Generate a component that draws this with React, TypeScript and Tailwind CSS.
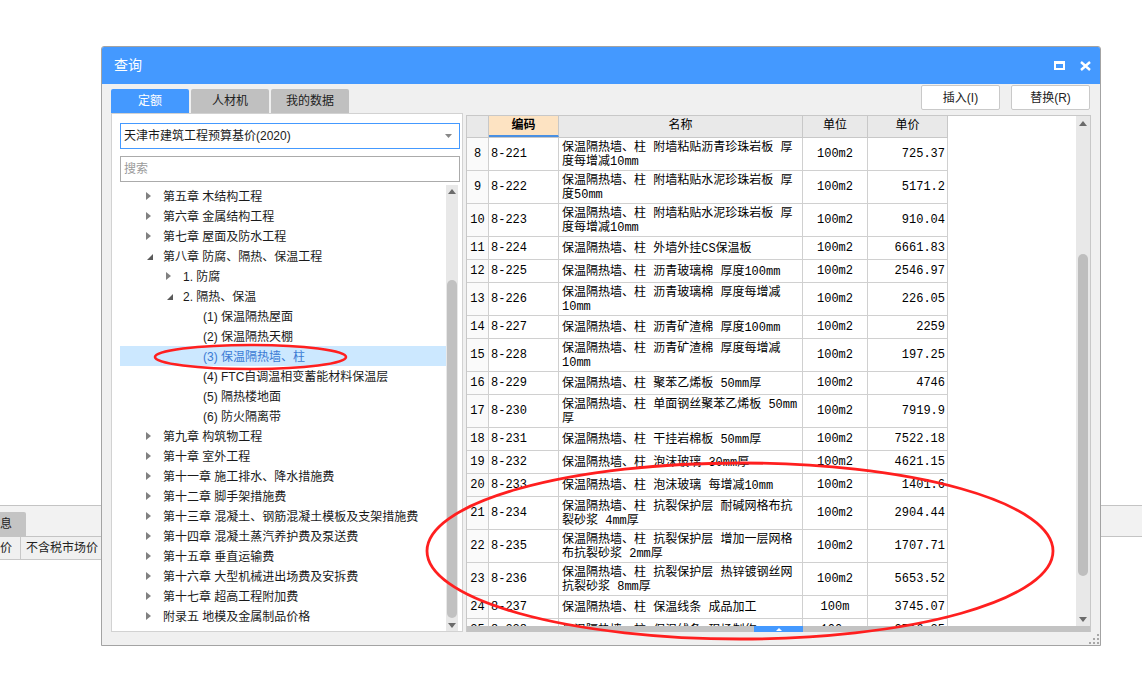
import React from 'react';

type TreeItem = { level: number; label: string; toggle?: 'open' | 'closed'; selected?: boolean };

const treeItems: TreeItem[] = [
  { level: 0, label: '第五章 木结构工程', toggle: 'closed' },
  { level: 0, label: '第六章 金属结构工程', toggle: 'closed' },
  { level: 0, label: '第七章 屋面及防水工程', toggle: 'closed' },
  { level: 0, label: '第八章 防腐、隔热、保温工程', toggle: 'open' },
  { level: 1, label: '1. 防腐', toggle: 'closed' },
  { level: 1, label: '2. 隔热、保温', toggle: 'open' },
  { level: 2, label: '(1) 保温隔热屋面' },
  { level: 2, label: '(2) 保温隔热天棚' },
  { level: 2, label: '(3) 保温隔热墙、柱', selected: true },
  { level: 2, label: '(4) FTC自调温相变蓄能材料保温层' },
  { level: 2, label: '(5) 隔热楼地面' },
  { level: 2, label: '(6) 防火隔离带' },
  { level: 0, label: '第九章 构筑物工程', toggle: 'closed' },
  { level: 0, label: '第十章 室外工程', toggle: 'closed' },
  { level: 0, label: '第十一章 施工排水、降水措施费', toggle: 'closed' },
  { level: 0, label: '第十二章 脚手架措施费', toggle: 'closed' },
  { level: 0, label: '第十三章 混凝土、钢筋混凝土模板及支架措施费', toggle: 'closed' },
  { level: 0, label: '第十四章 混凝土蒸汽养护费及泵送费', toggle: 'closed' },
  { level: 0, label: '第十五章 垂直运输费', toggle: 'closed' },
  { level: 0, label: '第十六章 大型机械进出场费及安拆费', toggle: 'closed' },
  { level: 0, label: '第十七章 超高工程附加费', toggle: 'closed' },
  { level: 0, label: '附录五 地模及金属制品价格', toggle: 'closed' },
];

type Row = { no: number; code: string; name: string; unit: string; price: string };

// names carry their own line break, as the grid wraps them
const rows: Row[] = [
  { no: 8, code: '8-221', name: '保温隔热墙、柱 附墙粘贴沥青珍珠岩板 厚\n度每增减10mm', unit: '100m2', price: '725.37' },
  { no: 9, code: '8-222', name: '保温隔热墙、柱 附墙粘贴水泥珍珠岩板 厚\n度50mm', unit: '100m2', price: '5171.2' },
  { no: 10, code: '8-223', name: '保温隔热墙、柱 附墙粘贴水泥珍珠岩板 厚\n度每增减10mm', unit: '100m2', price: '910.04' },
  { no: 11, code: '8-224', name: '保温隔热墙、柱 外墙外挂CS保温板', unit: '100m2', price: '6661.83' },
  { no: 12, code: '8-225', name: '保温隔热墙、柱 沥青玻璃棉 厚度100mm', unit: '100m2', price: '2546.97' },
  { no: 13, code: '8-226', name: '保温隔热墙、柱 沥青玻璃棉 厚度每增减\n10mm', unit: '100m2', price: '226.05' },
  { no: 14, code: '8-227', name: '保温隔热墙、柱 沥青矿渣棉 厚度100mm', unit: '100m2', price: '2259' },
  { no: 15, code: '8-228', name: '保温隔热墙、柱 沥青矿渣棉 厚度每增减\n10mm', unit: '100m2', price: '197.25' },
  { no: 16, code: '8-229', name: '保温隔热墙、柱 聚苯乙烯板 50mm厚', unit: '100m2', price: '4746' },
  { no: 17, code: '8-230', name: '保温隔热墙、柱 单面钢丝聚苯乙烯板 50mm\n厚', unit: '100m2', price: '7919.9' },
  { no: 18, code: '8-231', name: '保温隔热墙、柱 干挂岩棉板 50mm厚', unit: '100m2', price: '7522.18' },
  { no: 19, code: '8-232', name: '保温隔热墙、柱 泡沫玻璃 30mm厚', unit: '100m2', price: '4621.15' },
  { no: 20, code: '8-233', name: '保温隔热墙、柱 泡沫玻璃 每增减10mm', unit: '100m2', price: '1401.6' },
  { no: 21, code: '8-234', name: '保温隔热墙、柱 抗裂保护层 耐碱网格布抗\n裂砂浆 4mm厚', unit: '100m2', price: '2904.44' },
  { no: 22, code: '8-235', name: '保温隔热墙、柱 抗裂保护层 增加一层网格\n布抗裂砂浆 2mm厚', unit: '100m2', price: '1707.71' },
  { no: 23, code: '8-236', name: '保温隔热墙、柱 抗裂保护层 热锌镀钢丝网\n抗裂砂浆 8mm厚', unit: '100m2', price: '5653.52' },
  { no: 24, code: '8-237', name: '保温隔热墙、柱 保温线条 成品加工', unit: '100m', price: '3745.07' },
  { no: 25, code: '8-238', name: '保温隔热墙、柱 保温线条 现场制作', unit: '100m', price: '2716.35' },
];

const ArrowUp = () => (
  <svg width="8" height="5" viewBox="0 0 8 5">
    <polygon points="0,5 4,0 8,5" fill="#6b6b6b" />
  </svg>
);

const ArrowDown = () => (
  <svg width="8" height="5" viewBox="0 0 8 5">
    <polygon points="0,0 8,0 4,5" fill="#6b6b6b" />
  </svg>
);

const TreeRow: React.FC<{ item: TreeItem }> = ({ item }) => (
  <div
    className={`flex h-[20px] items-center whitespace-nowrap text-[12px] leading-[20px] ${
      item.selected ? 'bg-[#cce8ff] text-[#3b7bd4]' : 'text-[#1a1a1a]'
    }`}
    style={{ paddingLeft: 26 + item.level * 20 }}
  >
    <span className="flex w-[17px] shrink-0 items-center">
      {item.toggle === 'closed' && (
        <svg width="5" height="8" viewBox="0 0 5 8">
          <polygon points="0,0 5,4 0,8" fill="#808080" />
        </svg>
      )}
      {item.toggle === 'open' && (
        <svg width="6" height="6" viewBox="0 0 6 6" className="ml-[1px] mt-[2px]">
          <polygon points="6,0 6,6 0,6" fill="#5a5a5a" />
        </svg>
      )}
    </span>
    <span className="pt-[1px]">{item.label}</span>
  </div>
);

export default function App() {
  return (
    <div className="relative h-[681px] w-[1142px] overflow-hidden bg-white font-['Liberation_Sans','Noto_Sans_CJK_SC',sans-serif]">
      {/* application behind the dialog */}
      <div className="pt-[505px]">
        <div className="flex h-[32px] items-end border-y border-[#c4c4c4] bg-[#f2f2f2]">
          <div className="ml-[-14px] h-[24px] w-[40px] rounded-t-[2px] bg-[#c4c4c4] pl-[2px] text-[12px] leading-[24px] text-[#222]">
            信息
          </div>
        </div>
        <div className="flex h-[23px] w-[101px] border-b border-[#c8c8c8] bg-[#f0f0f0] text-[12px] leading-[22px] text-[#222]">
          <div className="w-[21px] overflow-hidden whitespace-nowrap border-r border-[#c8c8c8] pr-[8px] text-right" dir="rtl">
            价
          </div>
          <div className="w-[80px] pl-[5px]">不含税市场价</div>
        </div>
      </div>

      {/* dialog window */}
      <div className="absolute left-[101px] top-[46px] flex h-[600px] w-[1000px] flex-col overflow-hidden rounded-t-[3px] border border-[#a3a3a3] bg-[#f0f0f0]">
        {/* title bar */}
        <div className="flex h-[37px] shrink-0 items-center bg-[#4499ff] pl-[12px] pr-[9px]">
          <span className="text-[14px] text-white">查询</span>
          <div className="ml-auto flex items-center gap-[15px]">
            <svg width="11" height="9" viewBox="0 0 11 9">
              <rect x="1" y="1.5" width="9" height="6.5" fill="none" stroke="#fff" strokeWidth="2" />
              <rect x="0" y="0" width="11" height="3" fill="#fff" />
            </svg>
            <svg width="11" height="10" viewBox="0 0 11 10">
              <path d="M1 1 L10 9 M10 1 L1 9" stroke="#fff" strokeWidth="2.4" />
            </svg>
          </div>
        </div>

        {/* tabs + buttons */}
        <div className="flex h-[29px] shrink-0 pl-[9px] pr-[10px]">
          <div className="flex items-end gap-[2px] text-[12px]">
            <div className="h-[24px] w-[78px] rounded-t-[2px] bg-[#4499ff] text-center leading-[24px] text-white">定额</div>
            <div className="h-[24px] w-[78px] rounded-t-[2px] bg-[#c0c0c0] text-center leading-[24px] text-[#222]">人材机</div>
            <div className="h-[24px] w-[78px] rounded-t-[2px] bg-[#c0c0c0] text-center leading-[24px] text-[#222]">我的数据</div>
          </div>
          <div className="ml-auto mt-[1px] flex gap-[11px] text-[12px] text-[#222]">
            <button className="h-[25px] w-[79px] rounded-[2px] border border-[#c9c9c9] bg-white">插入(I)</button>
            <button className="h-[25px] w-[79px] rounded-[2px] border border-[#c9c9c9] bg-white">替换(R)</button>
          </div>
        </div>

        {/* main content */}
        <div className="flex h-[519px] shrink-0 items-start pl-[9px]">
          {/* left: tree */}
          <div className="flex h-[519px] w-[352px] flex-col border border-[#d2d2d2] bg-white">
            <div className="ml-[8px] mt-[9px] flex h-[26px] w-[340px] items-center border border-[#4499ff] pl-[3px] pr-[7px] text-[12px] text-[#1a1a1a]">
              <span>天津市建筑工程预算基价(2020)</span>
              <svg width="7" height="4" viewBox="0 0 7 4" className="ml-auto">
                <polygon points="0,0 7,0 3.5,4" fill="#888" />
              </svg>
            </div>
            <div className="ml-[8px] mt-[7px] flex h-[26px] w-[340px] items-center border border-[#ababab] pl-[3px] text-[12px] text-[#9a9a9a]">
              搜索
            </div>
            <div className="ml-[8px] mt-[3px] flex h-[446px]">
              <div className="w-[326px] overflow-hidden pt-[1px]">
                {treeItems.map((item) => (
                  <TreeRow key={item.label} item={item} />
                ))}
              </div>
              <div className="relative flex w-[12px] flex-col items-center bg-[#e8e8e8]">
                <div className="mt-[4px]">
                  <ArrowUp />
                </div>
                <div className="mt-[86px] h-[338px] w-[10px] rounded-[5px] bg-[#c1c1c1]" />
                <div className="mt-auto mb-[3px]">
                  <ArrowDown />
                </div>
              </div>
            </div>
          </div>

          {/* right: grid */}
          <div className="ml-[3px] mt-[2px] flex h-[517px] w-[625px] flex-col border-x border-t border-[#c8c8c8] bg-white font-['Liberation_Mono','Noto_Sans_CJK_SC',monospace] text-[12px] text-black">
            <div className="flex h-[510px]">
              <div className="flex-1 overflow-hidden">
                <div className="flex h-[22px] w-[481px] border-b border-[#c8c8c8] bg-[#e9e9e9] leading-[21px]">
                  <div className="w-[22px] border-r border-[#c8c8c8]" />
                  <div className="w-[70px] border-r border-b-2 border-r-[#c8c8c8] border-b-[#4a90e2] bg-[#fde3c2] text-center font-bold">编码</div>
                  <div className="w-[244px] border-r border-[#c8c8c8] text-center">名称</div>
                  <div className="w-[65px] border-r border-[#c8c8c8] text-center">单位</div>
                  <div className="w-[80px] border-r border-[#c8c8c8] text-center">单价</div>
                </div>
                {rows.map((r) => {
                  const tall = r.name.includes('\n');
                  return (
                    <div
                      key={r.no}
                      className={`flex w-[481px] border-b border-[#d0d0d0] ${tall ? 'h-[33px]' : 'h-[23px]'}`}
                    >
                      <div className="flex w-[22px] items-center justify-center border-r border-[#d0d0d0] bg-[#fafafa]">{r.no}</div>
                      <div className="flex w-[70px] items-center border-r border-[#d0d0d0] pl-[2px]">{r.code}</div>
                      <div className="flex w-[244px] items-center overflow-hidden whitespace-pre border-r border-[#d0d0d0] pl-[3px] pt-[1px] leading-[14px]">
                        {r.name}
                      </div>
                      <div className="flex w-[65px] items-center justify-center border-r border-[#d0d0d0]">{r.unit}</div>
                      <div className="flex w-[80px] items-center justify-end border-r border-[#d0d0d0] pr-[2px]">{r.price}</div>
                    </div>
                  );
                })}
              </div>
              <div className="flex w-[14px] flex-col items-center bg-[#e8e8e8]">
                <div className="mt-[5px]">
                  <ArrowUp />
                </div>
                <div className="mt-[128px] h-[322px] w-[10px] rounded-[5px] bg-[#bebebe]" />
                <div className="mt-auto mb-[4px]">
                  <ArrowDown />
                </div>
              </div>
            </div>
            <div className="h-[6px] bg-[#c3c3c3]">
              <div className="ml-[287px] flex h-[6px] w-[49px] items-start justify-center bg-[#4499ff]">
                <svg width="6" height="3" viewBox="0 0 6 3" className="mt-[2px]">
                  <polygon points="0,3 3,0 6,3" fill="#fff" />
                </svg>
              </div>
            </div>
          </div>
        </div>

        {/* bottom strip with resize grip */}
        <div className="flex flex-1 items-end justify-end pb-[1px] pr-[1px]">
          <svg width="10" height="10" viewBox="0 0 10 10">
            <rect x="8" y="0" width="2" height="2" fill="#a8a8a8" />
            <rect x="4" y="4" width="2" height="2" fill="#a8a8a8" />
            <rect x="8" y="4" width="2" height="2" fill="#a8a8a8" />
            <rect x="0" y="8" width="2" height="2" fill="#a8a8a8" />
            <rect x="4" y="8" width="2" height="2" fill="#a8a8a8" />
            <rect x="8" y="8" width="2" height="2" fill="#a8a8a8" />
          </svg>
        </div>
      </div>

      {/* red annotation marks */}
      <svg className="pointer-events-none absolute left-0 top-0" width="1142" height="681" viewBox="0 0 1142 681">
        <ellipse cx="250.5" cy="357" rx="95.5" ry="12" fill="none" stroke="#ff1f1f" strokeWidth="2.6" />
        <ellipse cx="740" cy="551" rx="313" ry="88" fill="none" stroke="#ff1f1f" strokeWidth="2.8" />
      </svg>
    </div>
  );
}
